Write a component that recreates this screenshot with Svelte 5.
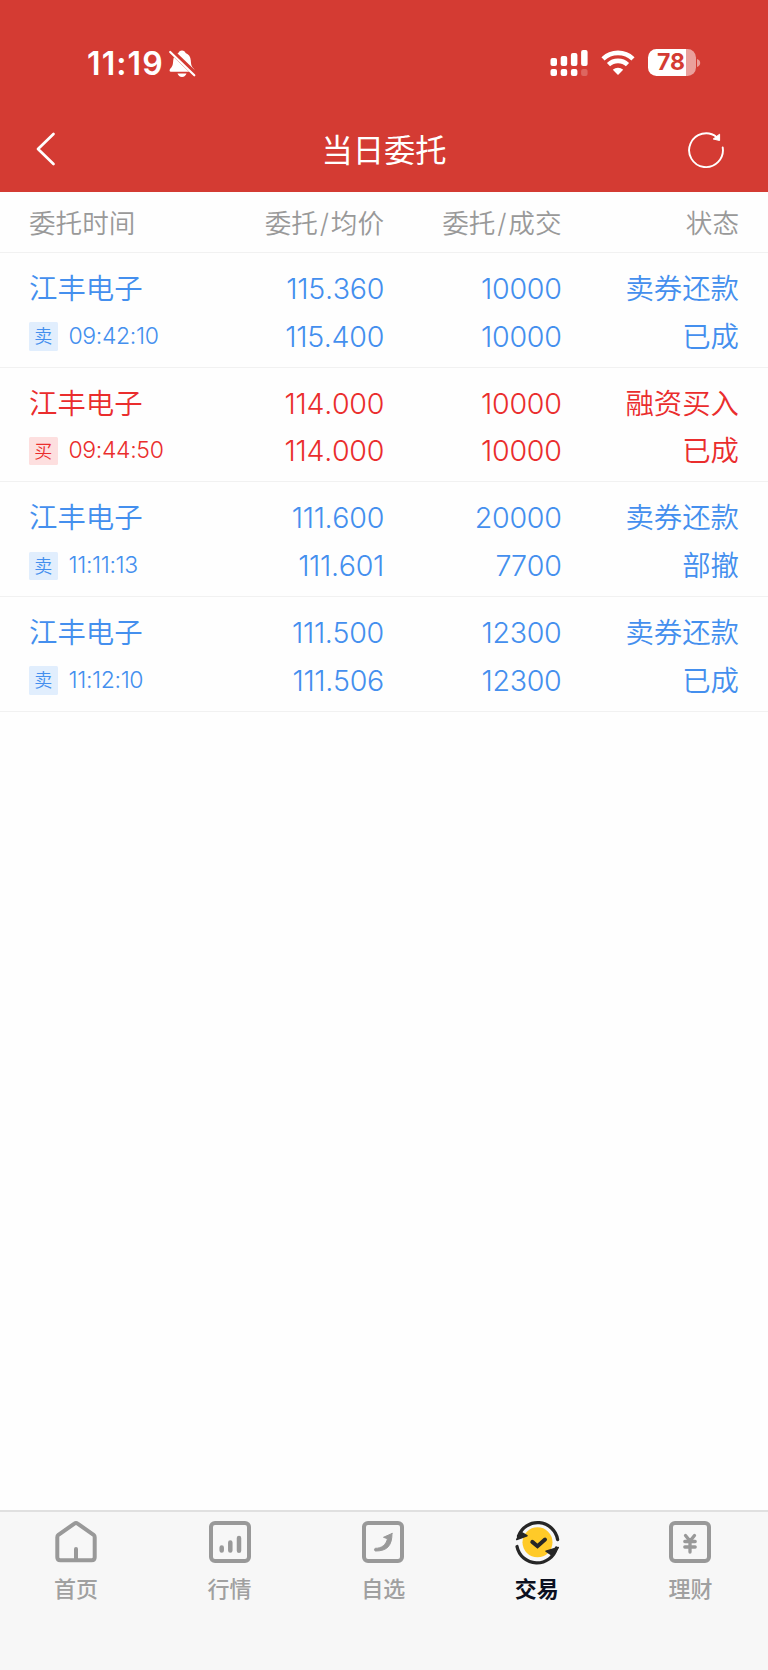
<script>
  const columns = [['委托时间'], ['委托', '均价'], ['委托', '成交'], ['状态']];
  const orders = [
    { name: '江丰电子', side: '卖', time: '09:42:10', price: '115.360', avg: '115.400', qty: '10000', filled: '10000', type: '卖券还款', state: '已成' },
    { name: '江丰电子', side: '买', time: '09:44:50', price: '114.000', avg: '114.000', qty: '10000', filled: '10000', type: '融资买入', state: '已成' },
    { name: '江丰电子', side: '卖', time: '11:11:13', price: '111.600', avg: '111.601', qty: '20000', filled: '7700', type: '卖券还款', state: '部撤' },
    { name: '江丰电子', side: '卖', time: '11:12:10', price: '111.500', avg: '111.506', qty: '12300', filled: '12300', type: '卖券还款', state: '已成' }
  ];
  const tabs = [
    { id: 'home', label: '首页' },
    { id: 'market', label: '行情' },
    { id: 'watch', label: '自选' },
    { id: 'trade', label: '交易' },
    { id: 'wealth', label: '理财' }
  ];
</script>

<div class="screen">
  <header>
    <div class="status">
      <div class="clock">
        <span class="time-now">11:19</span>
        <svg class="bell" width="28" height="30" viewBox="0 0 28 30">
          <path fill="#fff" d="M14 1.500c1.900 0 3.100 1.100 3.600 2.500 3.200 1.100 5 3.900 5.200 7.400.2 4.300.8 6 3 8.300.9 1 1 3-.8 3H3c-1.800 0-1.700-2-.8-3 2.200-2.300 2.800-4 3-8.300.2-3.500 2-6.300 5.200-7.400.5-1.400 1.700-2.500 3.600-2.500z" />
          <path fill="#fff" d="M9.500 24.500h9c-.6 2-2.300 3.400-4.500 3.400s-3.900-1.400-4.500-3.400z" />
          <path d="M3 1.800L27.500 25.500" stroke="#d43b33" stroke-width="5.200" />
          <path d="M2.200 3L26.300 26.300" stroke="#fff" stroke-width="2.200" stroke-linecap="round" />
        </svg>
      </div>
      <div class="indicators">
        <svg width="38" height="28" viewBox="0 0 38 28" fill="#fff">
          <rect x="0.500" y="9" width="6.500" height="8" rx="2" />
          <rect x="10.700" y="7" width="6.500" height="10" rx="2" />
          <rect x="20.900" y="4" width="6.500" height="13" rx="2" />
          <rect x="31.100" y="1" width="6.500" height="16" rx="2" />
          <rect x="0.500" y="20" width="6.500" height="7" rx="2" />
          <rect x="10.700" y="20" width="6.500" height="7" rx="2" />
          <rect x="20.900" y="20" width="6.500" height="7" rx="2" />
          <rect x="31.100" y="20" width="6.500" height="7" rx="2" opacity=".22" />
        </svg>
        <svg class="wifi" width="34" height="26" viewBox="0 0 34 26" fill="none" stroke="#fff">
          <path d="M2 8.800C10.300 .9 23.700 .9 32 8.800" stroke-width="4.600" />
          <path d="M7.500 14.600C12.800 9.600 21.200 9.600 26.500 14.600" stroke-width="4.600" />
          <path d="M17 25l-5.200-5.200c2.900-2.700 7.500-2.700 10.400 0z" fill="#fff" stroke="none" />
        </svg>
        <div class="battery">
          <div class="cell"><span>78</span></div>
          <svg width="4" height="10" viewBox="0 0 4 10"><path d="M0 1C2.300 1.800 3.200 3.200 3.200 5S2.300 8.200 0 9z" fill="#fff" opacity=".5" /></svg>
        </div>
      </div>
    </div>
    <nav>
      <svg class="back" width="24" height="36" viewBox="0 0 24 36" fill="none" stroke="#fff" stroke-width="2.700" stroke-linecap="round" stroke-linejoin="round">
        <path d="M19.500 3L4 18l15.500 15" />
      </svg>
      <h1>当日委托</h1>
      <svg class="refresh" width="40" height="40" viewBox="0 0 40 40">
        <path d="M36.700 18.500A16.900 16.900 0 1 1 30.800 8.200" fill="none" stroke="#fff" stroke-width="1.900" stroke-linecap="round" />
        <path d="M27.200 10L33.600 5.200V11.500z" fill="#fff" stroke="#fff" stroke-width="1" />
      </svg>
    </nav>
  </header>

  <main>
    <div class="grid heading">
      {#each columns as parts}
        <div>{parts[0]}{#if parts[1]}<span class="slash">/</span>{parts[1]}{/if}</div>
      {/each}
    </div>
    {#each orders as o}
      <div class="grid order" class:buy={o.side === '买'}>
        <div class="name">{o.name}</div>
        <div class="num">{o.price}</div>
        <div class="num">{o.qty}</div>
        <div class="kind">{o.type}</div>
        <div class="meta"><span class="tag">{o.side}</span><span class="at">{o.time}</span></div>
        <div class="num">{o.avg}</div>
        <div class="num">{o.filled}</div>
        <div class="kind">{o.state}</div>
      </div>
    {/each}
  </main>

  <footer>
    {#each tabs as tab}
      <div class="tab" class:active={tab.id === 'trade'}>
        <svg width="46" height="46" viewBox="0 0 46 46" fill="none" stroke="#999" stroke-width="4" stroke-linecap="round" stroke-linejoin="round">
          {#if tab.id === 'home'}
            <path d="M4.300 18.200Q4.300 16.700 5.400 15.800L21.400 4.600Q23 3.400 24.600 4.600L40.600 15.800Q41.700 16.700 41.700 18.200V38.300Q41.700 41.300 38.700 41.300H7.300Q4.300 41.300 4.300 38.300zM23 30v9" />
          {:else if tab.id === 'trade'}
            <circle cx="23.500" cy="23.300" r="15" fill="#ffca28" stroke="none" />
            <g stroke="#262626">
              <path d="M4.500 17A20.300 20.300 0 0 1 43.600 20.500" stroke-width="3.300" />
              <path d="M42.500 29A20.300 20.300 0 0 1 3 27.500" stroke-width="3.300" />
              <path d="M2.700 20.500L6.400 13 13 16.700z" fill="#262626" stroke-width="1.500" />
              <path d="M44.300 28.500L38.700 36.500 32 32.200z" fill="#262626" stroke-width="1.500" />
              <path d="M18.300 22.900l5.200 4.300 7.500-6.700" stroke-width="4" stroke-linejoin="miter" />
            </g>
          {:else}
            <rect x="4" y="4" width="38" height="38" rx="4" />
            {#if tab.id === 'market'}
              <path d="M14.700 28.600v3M23.300 23.500v8M32 19v12.800" stroke-width="4.500" />
            {:else if tab.id === 'watch'}
              <path d="M32 14.500L23.500 18.300 27.500 19.700C26 26 21.500 29.300 15.500 29.300A1.400 1.400 0 0 0 15.500 32C27 32 32 27 32 14.500z" fill="#999" stroke-width="1" />
            {:else}
              <path d="M18.500 16.500l4.500 5.500 4.500-5.500M17.800 22.500h10.400M17.800 28h10.400M23 22.500V33" stroke-width="3.300" />
            {/if}
          {/if}
        </svg>
        <span>{tab.label}</span>
      </div>
    {/each}
  </footer>
</div>

<style>
  :global(body) { background: #fff; }
  .screen {
    width: 768px;
    height: 1670px;
    display: flex;
    flex-direction: column;
    background: #fefefe;
    font-family: Inter, "Noto Sans CJK SC", sans-serif;
    overflow: hidden;
  }
  header { height: 192px; background: #d43b33; color: #fff; flex: none; }
  .status { height: 109px; box-sizing: border-box; padding: 18px 67px 0 87px; display: flex; justify-content: space-between; align-items: center; }
  .clock { display: flex; align-items: center; gap: 4px; }
  .time-now { font-size: 32px; line-height: 40px; font-weight: 600; letter-spacing: 1.100px; }
  .indicators { display: flex; align-items: center; margin-bottom: 2px; }
  .wifi { margin: 0 13px 0 13px; }
  .battery { display: flex; align-items: center; gap: 1px; }
  .cell {
    width: 48px;
    height: 27px;
    border-radius: 8.500px;
    background: linear-gradient(90deg, #fff 38px, #eaa09c 38px);
    color: #d43b33;
    font-size: 23px;
    line-height: 27px;
    font-weight: 650;
    text-align: center;
  }
  .cell span { margin-right: 2px; }
  nav { height: 80px; box-sizing: border-box; padding: 0 42px 0 34px; display: grid; grid-template-columns: 100px 1fr 92px; align-items: center; }
  h1 { margin: 4px 0 0; font-size: 31.300px; line-height: 40px; font-weight: 400; text-align: center; }
  .refresh { justify-self: end; }
  main { flex: 1; }
  .grid { display: grid; grid-template-columns: 200px 155px 177.500px 177.500px; padding: 0 29px; box-sizing: border-box; border-bottom: 1px solid #f1f1f1; }
  .grid > :not(:nth-child(4n + 1)) { text-align: right; }
  .heading { height: 61px; line-height: 63px; font-size: 26.600px; color: #999; font-weight: 350; }
  .slash { padding: 0 1.800px; }
  .order { height: 114.650px; padding-top: 12px; grid-template-rows: 47.700px 47.700px; line-height: 47.700px; font-size: 28.400px; color: #448fee; font-weight: 350; }
  .buy { color: #ea2d2d; }
  .num { font-size: 28.600px; letter-spacing: -0.300px; font-weight: 330; font-kerning: none; font-feature-settings: "calt" 0; }
  .meta { display: flex; align-items: center; gap: 11px; }
  .tag { width: 28.500px; height: 28.500px; line-height: 30px; font-size: 18px; text-align: center; background: #e1eefd; border-radius: 1.500px; }
  .buy .tag { background: #fddfdf; }
  .at { font-size: 23px; letter-spacing: -0.350px; font-weight: 330; font-kerning: none; font-feature-settings: "calt" 0; }
  footer { flex: none; height: 160px; box-sizing: border-box; border-top: 2px solid #e0e0e0; background: #f7f7f7; display: grid; grid-template-columns: repeat(5, 1fr); }
  .tab { padding: 7px 1.600px 0 0; display: flex; flex-direction: column; align-items: center; color: #a0a0a0; font-size: 22px; font-weight: 500; line-height: 32px; gap: 8px; }
  .tab svg { display: block; }
  .active { color: #0b1020; font-weight: 700; }
</style>
